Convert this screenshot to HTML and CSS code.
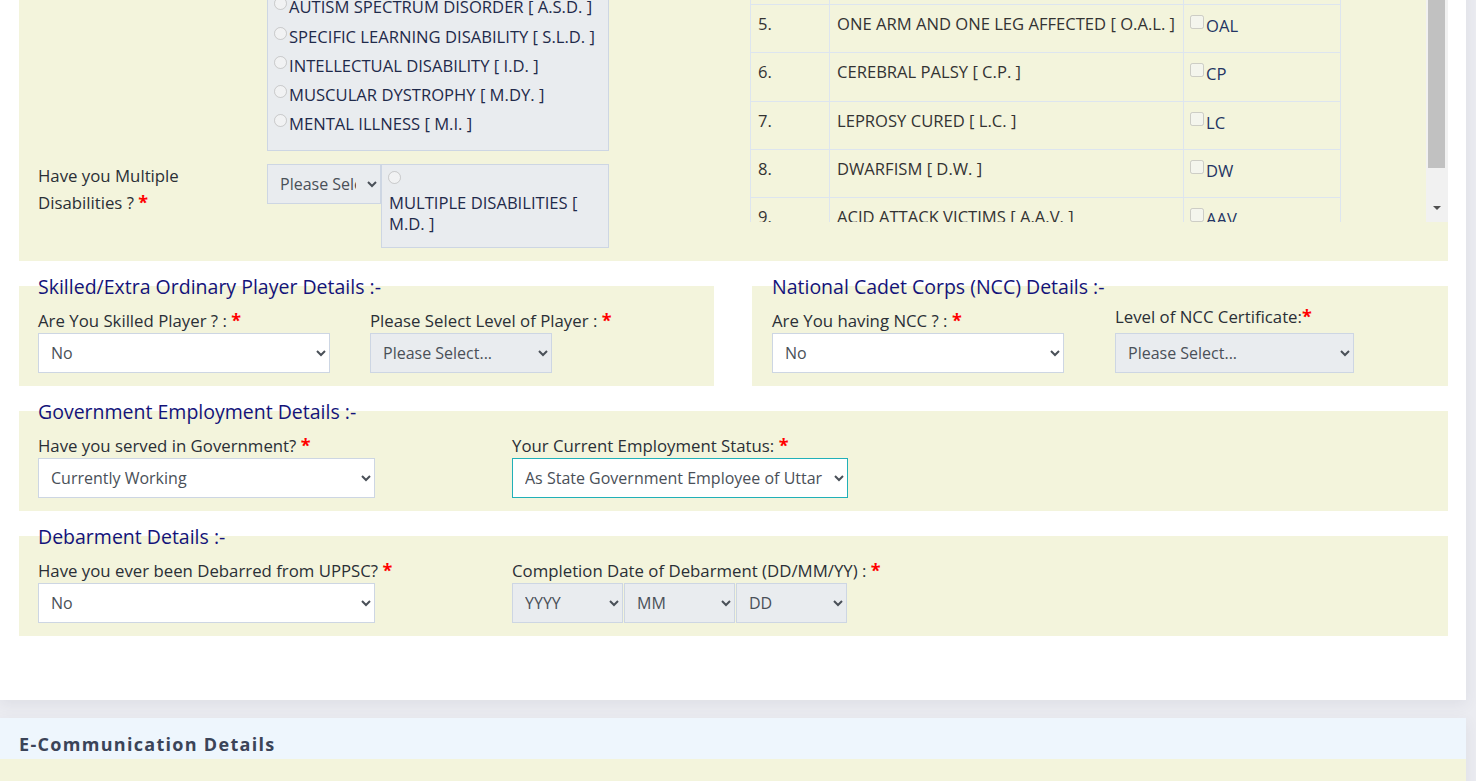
FILE: index.html
```html
<!DOCTYPE html>
<html lang="en">
<head>
<meta charset="utf-8">
<title>Application Form</title>
<link rel="stylesheet" href="styles.css">
</head>
<body>
<div class="page">
  <div class="card main">
    <section class="disab">
      <div class="disab-left">
        <div class="row-type">
          <div class="lbl-col"></div>
          <div class="radio-box">
            <label class="radio-item"><input type="radio" disabled>LOCOMOTOR DISABILITY [ L.D. ]</label>
            <label class="radio-item"><input type="radio" disabled>AUTISM SPECTRUM DISORDER [ A.S.D. ]</label>
            <label class="radio-item"><input type="radio" disabled>SPECIFIC LEARNING DISABILITY [ S.L.D. ]</label>
            <label class="radio-item"><input type="radio" disabled>INTELLECTUAL DISABILITY [ I.D. ]</label>
            <label class="radio-item"><input type="radio" disabled>MUSCULAR DYSTROPHY [ M.DY. ]</label>
            <label class="radio-item"><input type="radio" disabled>MENTAL ILLNESS [ M.I. ]</label>
          </div>
        </div>
        <div class="row-multi">
          <div class="lbl-col multi-label">Have you Multiple Disabilities ? <span class="req">*</span></div>
          <select class="sel sel-disabled sel-multi"><option>Please Select...</option></select>
          <div class="multi-box">
            <input type="radio" class="multi-radio" disabled>
            <div class="multi-text">MULTIPLE DISABILITIES [ M.D. ]</div>
          </div>
        </div>
      </div>
      <div class="disab-right">
        <div class="tbl-wrap">
          <table class="dtable">
            <tr><td class="c-no">4.</td><td class="c-name">ONE LEG AFFECTED [ O.L. ]</td><td class="c-code"><input type="checkbox" disabled>OL</td></tr>
            <tr><td class="c-no">5.</td><td class="c-name">ONE ARM AND ONE LEG AFFECTED [ O.A.L. ]</td><td class="c-code"><input type="checkbox" disabled>OAL</td></tr>
            <tr><td class="c-no">6.</td><td class="c-name">CEREBRAL PALSY [ C.P. ]</td><td class="c-code"><input type="checkbox" disabled>CP</td></tr>
            <tr><td class="c-no">7.</td><td class="c-name">LEPROSY CURED [ L.C. ]</td><td class="c-code"><input type="checkbox" disabled>LC</td></tr>
            <tr><td class="c-no">8.</td><td class="c-name">DWARFISM [ D.W. ]</td><td class="c-code"><input type="checkbox" disabled>DW</td></tr>
            <tr><td class="c-no">9.</td><td class="c-name">ACID ATTACK VICTIMS [ A.A.V. ]</td><td class="c-code"><input type="checkbox" disabled>AAV</td></tr>
          </table>
        </div>
        <div class="vscroll">
          <div class="thumb"></div>
          <div class="track-rest"></div>
          <div class="arrow-btn"><span class="tri"></span></div>
        </div>
      </div>
    </section>

    <div class="pair">
      <section class="group group-half">
        <h4 class="group-title">Skilled/Extra Ordinary Player Details :-</h4>
        <div class="fields">
          <div class="field w292">
            <div class="lbl">Are You Skilled Player ? : <span class="req">*</span></div>
            <select class="sel"><option>No</option></select>
          </div>
          <div class="field gap40 w182">
            <div class="lbl">Please Select Level of Player : <span class="req">*</span></div>
            <select class="sel sel-disabled"><option>Please Select...</option></select>
          </div>
        </div>
      </section>
      <section class="group group-half ncc">
        <h4 class="group-title">National Cadet Corps (NCC) Details :-</h4>
        <div class="fields">
          <div class="field w292">
            <div class="lbl">Are You having NCC ? : <span class="req">*</span></div>
            <select class="sel"><option>No</option></select>
          </div>
          <div class="field gap51 w239">
            <div class="lbl lbl-up">Level of NCC Certificate:<span class="req">*</span></div>
            <select class="sel sel-disabled"><option>Please Select...</option></select>
          </div>
        </div>
      </section>
    </div>

    <section class="group">
      <h4 class="group-title">Government Employment Details :-</h4>
      <div class="fields">
        <div class="field w337">
          <div class="lbl">Have you served in Government? <span class="req">*</span></div>
          <select class="sel"><option>Currently Working</option></select>
        </div>
        <div class="field gap137 w336">
          <div class="lbl">Your Current Employment Status: <span class="req">*</span></div>
          <select class="sel sel-focus"><option>As State Government Employee of Uttar Pradesh</option></select>
        </div>
      </div>
    </section>

    <section class="group">
      <h4 class="group-title">Debarment Details :-</h4>
      <div class="fields">
        <div class="field w337">
          <div class="lbl">Have you ever been Debarred from UPPSC? <span class="req">*</span></div>
          <select class="sel"><option>No</option></select>
        </div>
        <div class="field gap137">
          <div class="lbl">Completion Date of Debarment (DD/MM/YY) : <span class="req">*</span></div>
          <div class="date-row">
            <select class="sel sel-disabled sel-date"><option>YYYY</option></select>
            <select class="sel sel-disabled sel-date"><option>MM</option></select>
            <select class="sel sel-disabled sel-date"><option>DD</option></select>
          </div>
        </div>
      </div>
    </section>
  </div>

  <div class="card next">
    <div class="next-head">E-Communication Details</div>
    <div class="next-body"></div>
  </div>
</div>
</body>
</html>
```
FILE: styles.css
```css
* { box-sizing: border-box; }
html, body { margin: 0; padding: 0; }
body {
  background: #ebecf1;
  font-family: "Open Sans", "Noto Sans", sans-serif;
  font-size: 16.8px;
  color: #2a2f36;
  overflow: hidden;
  height: 781px;
}
.page { margin-top: -50px; }
.card {
  width: 1466px;
  background: #fff;
  box-shadow: 0 4px 14px rgba(60, 64, 90, 0.08);
}
.main { padding: 0 18px 64px 19px; }

/* disability block */
.disab {
  display: flex;
  align-items: flex-start;
  background: #f3f4dc;
  padding: 10px 0 13px 19px;
}
.disab-left { width: 571px; flex: none; }
.row-type, .row-multi { display: flex; align-items: flex-start; }
.lbl-col { width: 229px; flex: none; }
.radio-box {
  width: 342px;
  height: 191px;
  background: #e9ecef;
  border: 1px solid #cdd6e3;
  padding: 2px 1px 0;
  overflow: hidden;
}
.radio-item {
  display: block;
  font-size: 16.6px;
  line-height: 29.3px;
  color: #1f2a4a;
  white-space: nowrap;
}
.radio-item input { margin: 5px 2px 0 5px; vertical-align: top; }
.row-multi { margin-top: 13px; }
.multi-label { line-height: 27px; margin-top: -2.5px; color: #2a2f36; padding-right: 20px; }
.sel {
  display: block;
  width: 100%;
  height: 40px;
  border: 1px solid #cdd6e3;
  border-radius: 0;
  background: #fff;
  font-family: inherit;
  font-size: 16px;
  color: #4a5058;
  padding: 0 8px;
}
.sel-disabled { background: #e9ecef; }
.sel-focus { border-color: #21b0b8; }
.sel-multi { width: 114px; flex: none; }
.multi-box {
  width: 228px;
  height: 84px;
  background: #e9ecef;
  border: 1px solid #cdd6e3;
  flex: none;
}
.multi-radio { display: block; margin: 6px 0 8px 6px; }
.multi-text { padding-left: 7px; font-size: 16.6px; line-height: 21px; color: #1f2a4a; }

.disab-right {
  margin-left: 141px;
  flex: 1;
  display: flex;
  height: 262px;
  overflow: hidden;
}
.tbl-wrap { flex: 1; overflow: hidden; }
.dtable {
  border-collapse: collapse;
  margin-top: -4.25px;
  color: #333;
  table-layout: fixed;
  width: 590px;
  font-size: 16.6px;
}
.dtable td {
  border: 1px solid #dde5ef;
  height: 48.25px;
  padding: 7px 7px 0;
  vertical-align: top;
  line-height: 24px;
  white-space: nowrap;
  overflow: hidden;
}
.c-no { width: 79px; }
.c-name { width: 354px; }
.c-code { width: 157px; padding-left: 2px !important; color: #243463; }
.c-code input { width: 14px; height: 14px; margin: 3px 2px 3px 4px; vertical-align: 3px; }
.vscroll {
  width: 22px;
  flex: none;
  background: #f1f1f1;
  display: flex;
  flex-direction: column;
}
.thumb { height: 208px; margin: 0 3px 0 2px; background: #c1c1c1; }
.track-rest { flex: 1; }
.arrow-btn { height: 22px; display: flex; justify-content: center; padding-top: 6px; }
.tri {
  width: 0; height: 0;
  border-left: 4px solid transparent;
  border-right: 4px solid transparent;
  border-top: 4px solid #505050;
}

/* groups */
.pair { display: flex; gap: 38px; }
.pair .group { flex: 1; }
.group {
  display: flow-root;
  background: #f3f4dc;
  margin-top: 25px;
  height: 100px;
  padding: 0 19px 13px;
}
.ncc { padding-left: 20px; }
.group-title {
  margin: -12px 0 0;
  font-size: 19.5px;
  font-weight: 400;
  line-height: 26px;
  color: #13137a;
}
.fields { display: flex; margin-top: 8px; }
.field { flex: none; }
.lbl { line-height: 24px; height: 25px; white-space: nowrap; color: #2a2f36; }
.lbl-up { margin-top: -4px; height: 29px; }
.req { color: #f00; font-weight: 700; font-size: 18px; }
.w292 { width: 292px; }
.w182 { width: 182px; }
.w239 { width: 239px; }
.w337 { width: 337px; }
.w336 { width: 336px; }
.gap40 { margin-left: 40px; }
.gap51 { margin-left: 51px; }
.gap137 { margin-left: 137px; }
.date-row { display: flex; gap: 1px; }
.sel-date { width: 111px; }

/* next card */
.next { margin-top: 18px; }
.next-head {
  background: #eef6fd;
  height: 41px;
  padding: 13px 19px 0;
  font-size: 18px;
  font-weight: 700;
  letter-spacing: 1.3px;
  color: #3b4458;
  line-height: 26px;
}
.next-body { background: #f3f4dc; height: 40px; }
```
